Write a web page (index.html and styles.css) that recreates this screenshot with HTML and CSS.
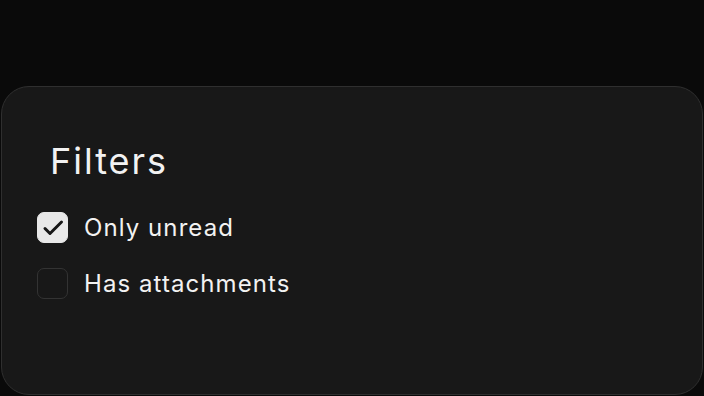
FILE: index.html
```html
<!DOCTYPE html>
<html lang="en">
<head>
    <meta charset="UTF-8">
    <meta name="viewport" content="width=device-width, initial-scale=1.0">
    <title>Filters</title>
    <link rel="stylesheet" href="styles.css">
</head>
<body>
    <div class="sheet">
        <h2 class="sheet-title">Filters</h2>
        <div class="filter-list">
            <label class="filter">
                <span class="box checked">
                    <svg viewBox="0 0 31 31" width="31" height="31">
                        <path d="M8 16.5l5 5L24.5 10" fill="none" stroke="#161616" stroke-width="3" stroke-linecap="round" stroke-linejoin="round"/>
                    </svg>
                </span>
                <span class="filter-label">Only unread</span>
            </label>
            <label class="filter">
                <span class="box"></span>
                <span class="filter-label">Has attachments</span>
            </label>
        </div>
    </div>
</body>
</html>
```

FILE: styles.css
```css
html, body {
    height: 100%;
}

body {
    margin: 0;
    background: #0a0a0a;
    font-family: Inter, 'Noto Sans', sans-serif;
    color: #f2f2f2;
    display: flex;
    flex-direction: column;
    justify-content: flex-end;
}

.sheet {
    height: 307px;
    margin: 0 1px 1px;
    background: #181818;
    border: 1px solid #2f2f2f;
    border-radius: 28px;
    padding: 0 35px;
}

.sheet-title {
    margin: 52px 0 29px 13px;
    font-size: 36px;
    font-weight: 400;
    line-height: 44px;
    letter-spacing: 0.055em;
}

.filter-list {
    display: flex;
    flex-direction: column;
    gap: 25px;
}

.filter {
    display: flex;
    align-items: center;
    gap: 16px;
    cursor: pointer;
}

.box {
    position: relative;
    width: 29px;
    height: 29px;
    border: 1px solid #333;
    border-radius: 7px;
}

.box svg {
    position: absolute;
    top: -1px;
    left: -1px;
}

.box.checked {
    background: #e8e8e8;
    border-color: #e8e8e8;
}

.filter-label {
    font-size: 24px;
    line-height: 31px;
    letter-spacing: 0.045em;
}
```
